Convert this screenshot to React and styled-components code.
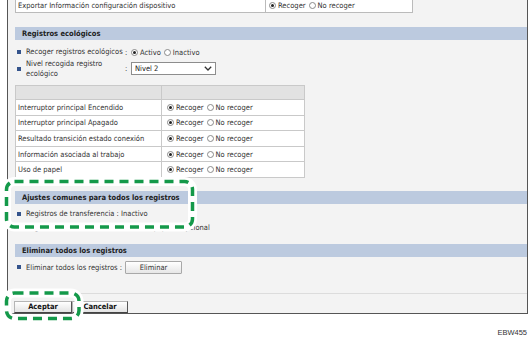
import React from 'react';
import styled, { createGlobalStyle } from 'styled-components';

const GlobalStyle = createGlobalStyle`
  body {
    margin: 0;
    background: #fff;
    font-family: "DejaVu Sans Condensed", "DejaVu Sans", sans-serif;
    font-size: 7.5px;
    color: #333;
  }
`;

const Page = styled.div`
  position: relative;
  width: 530px;
  height: 337px;
  overflow: hidden;
`;

const Frame = styled.div`
  box-sizing: border-box;
  width: 521px;
  margin: -4px 0 0 7px;
  padding-left: 7px;
  background: #f3f3f3;
  border: 1px solid #555;
  border-top: none;
`;

const ExportBox = styled.div`
  box-sizing: border-box;
  margin-top: 1px;
  width: 398px;
  height: 16px;
  display: grid;
  grid-template-columns: 249px 1fr;
  align-items: center;
  background: #fff;
  border: 1px solid #bbb;
`;

const ExportLabel = styled.div`
  padding-left: 2px;
`;

const ExportControl = styled.div`
  height: 100%;
  display: flex;
  align-items: center;
  padding-left: 3px;
  border-left: 1px solid #bbb;
`;

const SectionHeader = styled.div`
  margin-top: ${p => p.$top}px;
  height: 13px;
  line-height: 13px;
  padding-left: 7px;
  background: #bccadf;
  font-weight: bold;
  font-size: 7.5px;
  color: #222;
`;

const FieldRow = styled.div`
  display: grid;
  grid-template-columns: 9px 99px 6px auto;
  align-items: center;
  padding-left: 2px;
  margin-top: ${p => p.$top}px;
  height: ${p => p.$h}px;
`;

const Bullet = styled.span`
  width: 4px;
  height: 4px;
  background: #34548c;
`;

const Label = styled.span`
  line-height: 9.5px;
  white-space: nowrap;
`;

const Radios = styled.div`
  display: flex;
  align-items: center;
`;

const RadioMark = styled.span`
  box-sizing: border-box;
  width: 7px;
  height: 7px;
  margin-right: 2px;
  border-radius: 50%;
  border: 1px solid #8a8a8a;
  background: #fff;
  display: inline-flex;
  align-items: center;
  justify-content: center;
  &::after {
    content: '';
    width: 3px;
    height: 3px;
    border-radius: 50%;
    background: ${p => (p.$on ? '#222' : 'transparent')};
  }
`;

const RadioText = styled.span`
  margin-right: 3px;
`;

const Radio = ({ on, children }) => (
  <>
    <RadioMark $on={on} />
    <RadioText>{children}</RadioText>
  </>
);

const Select = styled.div`
  box-sizing: border-box;
  width: 85px;
  height: 13px;
  display: flex;
  align-items: center;
  justify-content: space-between;
  padding: 0 3px 0 3px;
  background: #fff;
  border: 1px solid #8d8d8d;
  color: #222;
`;

const Table = styled.table`
  margin-top: 11px;
  width: 290px;
  border-collapse: collapse;
  background: #fff;
  font-size: 7.5px;
  td, th {
    border: 1px solid #c9c9c9;
    padding: 0 2px;
    height: 14.6px;
  }
  th {
    background: #e2e2e2;
    height: 13px;
  }
  td:first-child { width: 141px; }
  td:last-child { padding-left: 5px; }
`;

const PlainRow = styled.div`
  display: flex;
  align-items: center;
  gap: 5px;
  padding-left: 2px;
  margin-top: ${p => p.$top}px;
  height: ${p => p.$h}px;
  white-space: nowrap;
`;

const SmallButton = styled.button`
  box-sizing: border-box;
  width: 57px;
  height: 13px;
  margin-left: -2px;
  padding: 0;
  font: inherit;
  color: #333;
  background: linear-gradient(#ffffff, #e6e6e6);
  border: 1px solid #a8a8a8;
  border-radius: 1px;
`;

const Footer = styled.div`
  margin: 19px 0 0 -7px;
  padding: 7px 0 0 6px;
  border-top: 1px solid #dcdcdc;
  display: flex;
`;

const MainButton = styled.button`
  box-sizing: border-box;
  width: ${p => p.$w}px;
  height: 12px;
  padding: 0;
  font: inherit;
  font-weight: bold;
  color: #111;
  background: linear-gradient(#ffffff, #e3e3e3);
  border: 1px solid #b5b5b5;
  border-right-color: #555;
  border-bottom-color: #444;
`;

const Code = styled.div`
  margin-top: 14px;
  padding-right: 3px;
  text-align: right;
  font-family: "Liberation Sans", Arial, sans-serif;
  font-size: 7.5px;
  line-height: 9px;
  color: #333;
`;

const Highlight = styled.svg`
  position: absolute;
  left: 0;
  top: 0;
  pointer-events: none;
`;

const Ring = ({ x, y, w, h }) => (
  <>
    <rect x={x} y={y} width={w} height={h} rx="8" fill="none" stroke="#fff" strokeWidth="9" />
    <rect x={x} y={y} width={w} height={h} rx="8" fill="none" stroke="#14994a" strokeWidth="3.5" strokeDasharray="9 6" />
  </>
);

const Chevron = () => (
  <svg width="8" height="5" viewBox="0 0 8 5">
    <polyline points="0.8,0.8 4,4 7.2,0.8" fill="none" stroke="#333" strokeWidth="1.3" />
  </svg>
);

const logRows = [
  'Interruptor principal Encendido',
  'Interruptor principal Apagado',
  'Resultado transición estado conexión',
  'Información asociada al trabajo',
  'Uso de papel',
];

export default function App() {
  return (
    <Page>
      <GlobalStyle />
      <Frame>
        <ExportBox>
          <ExportLabel>Exportar Información configuración dispositivo</ExportLabel>
          <ExportControl>
            <Radios>
              <Radio on>Recoger</Radio>
              <Radio>No recoger</Radio>
            </Radios>
          </ExportControl>
        </ExportBox>

        <SectionHeader $top={14}>Registros ecológicos</SectionHeader>
        <FieldRow $top={6} $h={12}>
          <Bullet />
          <Label>Recoger registros ecológicos</Label>
          <span>:</span>
          <Radios>
            <Radio on>Activo</Radio>
            <Radio>Inactivo</Radio>
          </Radios>
        </FieldRow>
        <FieldRow $top={1} $h={15}>
          <Bullet />
          <Label>Nivel recogida registro<br />ecológico</Label>
          <span>:</span>
          <Select>
            <span>Nivel 2</span>
            <Chevron />
          </Select>
        </FieldRow>

        <Table>
          <thead>
            <tr><th></th><th></th></tr>
          </thead>
          <tbody>
            {logRows.map(r => (
              <tr key={r}>
                <td>{r}</td>
                <td>
                  <Radios>
                    <Radio on>Recoger</Radio>
                    <Radio>No recoger</Radio>
                  </Radios>
                </td>
              </tr>
            ))}
          </tbody>
        </Table>

        <SectionHeader $top={13}>Ajustes comunes para todos los registros</SectionHeader>
        <PlainRow $top={4} $h={12}>
          <Bullet />
          <span>Registros de transferencia : Inactivo</span>
        </PlainRow>
        <PlainRow $top={2} $h={12}>
          <Bullet />
          <span>Registros de información de uso de equipos : Opcional</span>
        </PlainRow>

        <SectionHeader $top={10}>Eliminar todos los registros</SectionHeader>
        <PlainRow $top={4} $h={13}>
          <Bullet />
          <span>Eliminar todos los registros :</span>
          <SmallButton>Eliminar</SmallButton>
        </PlainRow>

        <Footer>
          <MainButton $w={58}>Aceptar</MainButton>
          <MainButton $w={56}>Cancelar</MainButton>
        </Footer>
      </Frame>
      <Code>EBW455</Code>

      <Highlight width="530" height="337">
        <Ring x={6.5} y={181.5} w={186} h={45.5} />
        <Ring x={6.5} y={293} w={72.5} h={25.5} />
      </Highlight>
    </Page>
  );
}
